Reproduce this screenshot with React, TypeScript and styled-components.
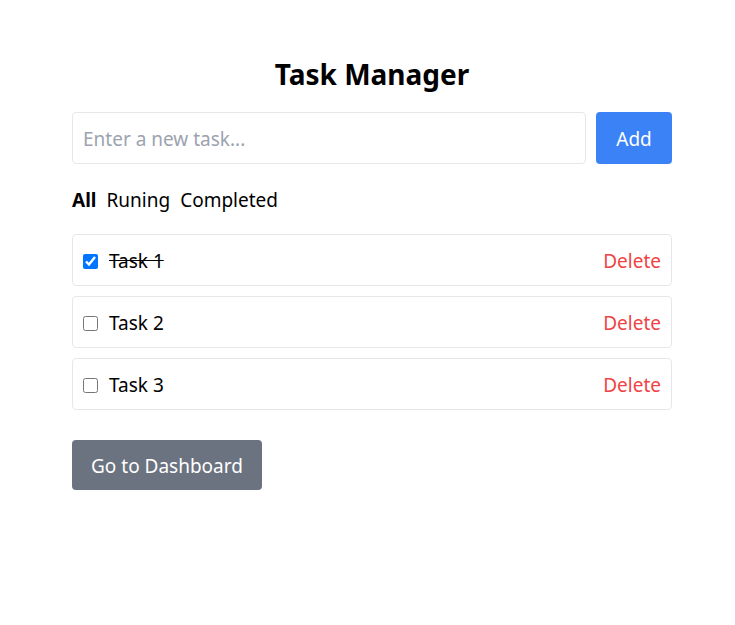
import React, { useState } from "react";
import styled, { createGlobalStyle } from "styled-components";

const Global = createGlobalStyle`
  body { margin: 0; font-family: "Noto Sans", "Open Sans", sans-serif; background: #fff; color: #000; }
  * { box-sizing: border-box; }
`;

const Page = styled.div`
  width: 600px;
  margin-left: 72px;
  padding-top: 52px;
  display: flex;
  flex-direction: column;
`;

const Title = styled.h1`
  margin: 0 0 16px;
  font-size: 28px;
  font-weight: 700;
  text-align: center;
  line-height: 44px;
`;

const InputRow = styled.div`
  display: flex;
  gap: 10px;
  height: 52px;
`;

const TaskInput = styled.input`
  flex: 1;
  border: 1px solid #e5e7eb;
  border-radius: 4px;
  padding: 2px 10px 0;
  font-family: inherit;
  font-size: 19px;
  outline: none;
  &::placeholder { color: #9ca3af; }
`;

const AddButton = styled.button`
  width: 76px;
  border: none;
  border-radius: 4px;
  background: #3b82f6;
  color: #fff;
  font-family: inherit;
  font-size: 19px;
  padding-top: 2px;
`;

const Filters = styled.div`
  display: flex;
  gap: 10px;
  margin-top: 22px;
  height: 28px;
  align-items: center;
`;

const Filter = styled.span<{ $active?: boolean }>`
  font-size: 19px;
  font-weight: ${(p) => (p.$active ? 700 : 400)};
`;

const List = styled.div`
  display: flex;
  flex-direction: column;
  gap: 10px;
  margin-top: 20px;
`;

const Row = styled.div`
  display: flex;
  align-items: center;
  height: 52px;
  border: 1px solid #e5e7eb;
  border-radius: 4px;
  padding: 2px 10px 0 10px;
`;

const Check = styled.input`
  width: 15px;
  height: 15px;
  margin: 0 11px 0 0;
`;

const Label = styled.span<{ $done?: boolean }>`
  flex: 1;
  font-size: 19px;
  text-decoration: ${(p) => (p.$done ? "line-through" : "none")};
`;

const DeleteButton = styled.button`
  border: none;
  background: none;
  padding: 0;
  color: #ef4444;
  font-family: inherit;
  font-size: 19px;
`;

const DashButton = styled.button`
  align-self: flex-start;
  margin-top: 30px;
  height: 50px;
  padding: 2px 19px 0;
  border: none;
  border-radius: 4px;
  background: #6b7280;
  color: #fff;
  font-family: inherit;
  font-size: 19px;
  white-space: nowrap;
`;

export default function App() {
  const [tasks, setTasks] = useState([
    { id: 1, text: "Task 1", done: true },
    { id: 2, text: "Task 2", done: false },
    { id: 3, text: "Task 3", done: false },
  ]);
  return (
    <>
      <Global />
      <Page>
        <Title>Task Manager</Title>
        <InputRow>
          <TaskInput placeholder="Enter a new task..." />
          <AddButton>Add</AddButton>
        </InputRow>
        <Filters>
          <Filter $active>All</Filter>
          <Filter>Runing</Filter>
          <Filter>Completed</Filter>
        </Filters>
        <List>
          {tasks.map((t) => (
            <Row key={t.id}>
              <Check
                type="checkbox"
                checked={t.done}
                onChange={() =>
                  setTasks(tasks.map((x) => (x.id === t.id ? { ...x, done: !x.done } : x)))
                }
              />
              <Label $done={t.done}>{t.text}</Label>
              <DeleteButton>Delete</DeleteButton>
            </Row>
          ))}
        </List>
        <DashButton>Go to Dashboard</DashButton>
      </Page>
    </>
  );
}
